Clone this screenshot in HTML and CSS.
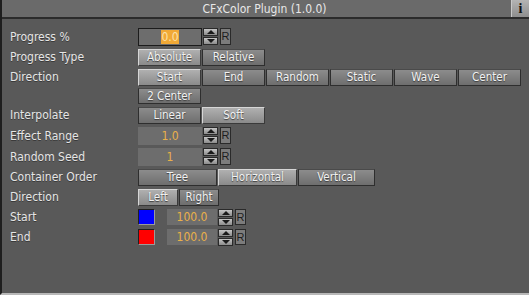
FILE: index.html
```html
<!DOCTYPE html>
<html lang="en">
<head>
    <meta charset="UTF-8">
    <title>CFxColor Plugin</title>
    <link rel="stylesheet" href="styles.css">
</head>
<body>
    <div class="panel">
        <div class="titlebar">
            <span class="title">CFxColor Plugin (1.0.0)</span>
            <span class="info-btn">i</span>
        </div>
        <div class="content">
            <div class="row r-progress">
                <label>Progress %</label>
                <div class="field focused"><span class="sel">0.0</span></div>
                <div class="spin"><span class="up"></span><span class="down"></span></div>
                <span class="reset">R</span>
            </div>
            <div class="row">
                <label>Progress Type</label>
                <div class="group">
                    <span class="btn on">Absolute</span>
                    <span class="btn">Relative</span>
                </div>
            </div>
            <div class="row r-direction">
                <label>Direction</label>
                <div class="group wrap">
                    <span class="btn on">Start</span>
                    <span class="btn">End</span>
                    <span class="btn">Random</span>
                    <span class="btn">Static</span>
                    <span class="btn">Wave</span>
                    <span class="btn">Center</span>
                    <span class="btn">2 Center</span>
                </div>
            </div>
            <div class="row">
                <label>Interpolate</label>
                <div class="group">
                    <span class="btn">Linear</span>
                    <span class="btn on">Soft</span>
                </div>
            </div>
            <div class="row r-field">
                <label>Effect Range</label>
                <div class="field">1.0</div>
                <div class="spin"><span class="up"></span><span class="down"></span></div>
                <span class="reset">R</span>
            </div>
            <div class="row r-field">
                <label>Random Seed</label>
                <div class="field">1</div>
                <div class="spin"><span class="up"></span><span class="down"></span></div>
                <span class="reset">R</span>
            </div>
            <div class="row">
                <label>Container Order</label>
                <div class="group">
                    <span class="btn wide">Tree</span>
                    <span class="btn wide on">Horizontal</span>
                    <span class="btn wide last">Vertical</span>
                </div>
            </div>
            <div class="row">
                <label>Direction</label>
                <div class="group">
                    <span class="btn small on">Left</span>
                    <span class="btn small">Right</span>
                </div>
            </div>
            <div class="row r-color">
                <label>Start</label>
                <span class="swatch blue"></span>
                <div class="field short">100.0</div>
                <div class="spin"><span class="up"></span><span class="down"></span></div>
                <span class="reset">R</span>
            </div>
            <div class="row r-color">
                <label>End</label>
                <span class="swatch red"></span>
                <div class="field short">100.0</div>
                <div class="spin"><span class="up"></span><span class="down"></span></div>
                <span class="reset">R</span>
            </div>
        </div>
    </div>
</body>
</html>
```
FILE: styles.css
```css
body {
    margin: 0;
    background: #595959;
    font-family: "DejaVu Sans Condensed", "Liberation Sans", sans-serif;
    font-size: 12px;
    color: #e6e6e6;
}
.panel {
    width: 529px;
    height: 295px;
    box-sizing: border-box;
    border-left: 2px solid #1e1e1e;
    border-bottom: 2px solid #b8b8b8;
    background: #595959;
    overflow: hidden;
}
.titlebar {
    position: relative;
    height: 17px;
    margin-left: -2px;
    background: #6a6a6a;
    border-bottom: 2px solid #2b2b2b;
    display: flex;
    align-items: center;
    justify-content: center;
}
.title {
    color: #e8e8e8;
    font-size: 12px;
}
.info-btn {
    position: absolute;
    right: 0;
    top: 0;
    width: 17px;
    height: 17px;
    background: linear-gradient(#b4b4b4, #8e8e8e);
    border-left: 1px solid #c8c8c8;
    color: #111;
    font-family: "Liberation Serif", serif;
    font-weight: bold;
    font-size: 14px;
    text-align: center;
    line-height: 18px;
}
.content {
    padding: 9px 0 0 8px;
    display: flex;
    flex-direction: column;
    gap: 3px;
}
.row {
    display: flex;
    align-items: flex-start;
    min-height: 17px;
}
.row label {
    width: 128px;
    line-height: 17px;
    text-shadow: 0 1px 0 #3a3a3a;
}
.r-progress label,
.r-field label {
    line-height: 18px;
}
.r-color label {
    line-height: 16px;
}
.group {
    display: flex;
    gap: 1px;
}
.group.wrap {
    flex-wrap: wrap;
    width: 384px;
    row-gap: 2px;
}
.btn {
    box-sizing: border-box;
    width: 63px;
    height: 17px;
    line-height: 15px;
    font-size: 11.5px;
    text-align: center;
    color: #f2f2f2;
    text-shadow: 0 1px 1px #3c3c3c;
    background: linear-gradient(#8c8c8c, #6e6e6e);
    border: 1px solid #2e2e2e;
    border-top-color: #4a4a4a;
}
.btn.on {
    background: linear-gradient(#b0b0b0, #8a8a8a);
    border-color: #d6d6d6 #3a3a3a #3a3a3a #d6d6d6;
}
.group.wrap .btn:last-child {
    height: 16px;
    line-height: 14px;
}
.btn.wide {
    width: 79px;
}
.btn.wide.last {
    width: 77px;
}
.btn.small {
    width: 40px;
}
.field {
    box-sizing: border-box;
    width: 64px;
    height: 18px;
    line-height: 18px;
    background: #6d6d6d;
    color: #e9b04a;
    text-align: center;
}
.field.focused {
    border: 1px solid #1c1c1c;
    line-height: 16px;
}
.sel {
    background: #f1a936;
    color: #fbe0a8;
}
.field.short {
    width: 50px;
    height: 16px;
    line-height: 16px;
    margin-left: 12px;
}
.spin {
    display: flex;
    flex-direction: column;
    width: 15px;
    margin-left: 1px;
    gap: 1px;
}
.spin span {
    position: relative;
    height: 8px;
    background: linear-gradient(#c4c4c4, #8c8c8c);
    border: 1px solid #2a2a2a;
    box-sizing: border-box;
}
.spin .up::after,
.spin .down::after {
    content: "";
    position: absolute;
    left: 3px;
    border-left: 4px solid transparent;
    border-right: 4px solid transparent;
}
.spin .up::after {
    top: 1px;
    border-bottom: 4px solid #1a1a1a;
}
.spin .down::after {
    top: 1px;
    border-top: 4px solid #1a1a1a;
}
.reset {
    box-sizing: border-box;
    width: 11px;
    height: 17px;
    margin-left: 2px;
    background: #7c7c7c;
    border: 1px solid #2a2a2a;
    color: #1e1e1e;
    font-family: "Liberation Sans", sans-serif;
    font-size: 11px;
    line-height: 15px;
    text-align: center;
}
.r-color .reset {
    height: 16px;
}
.swatch {
    box-sizing: border-box;
    width: 17px;
    height: 16px;
    border: 1px solid #202020;
    border-right-color: #9a9a9a;
    border-bottom-color: #9a9a9a;
}
.swatch.blue {
    background: #0000ff;
}
.swatch.red {
    background: #ff0000;
}
```
